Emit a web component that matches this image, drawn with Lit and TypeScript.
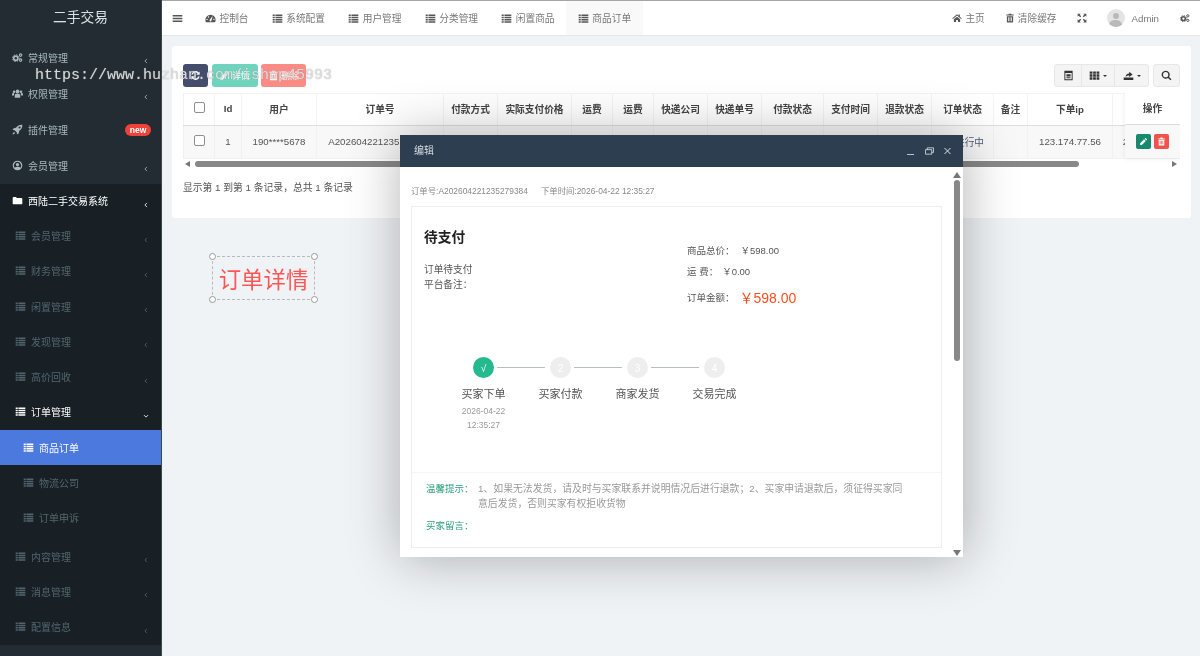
import { LitElement, html, css, svg } from "lit";
import { customElement } from "lit/decorators.js";

const paths: Record<string, any> = {
  list: svg`<path d="M0 0h3v2.4H0zM4 0h10v2.4H4zM0 3.3h3v2.4H0zM4 3.3h10v2.4H4zM0 6.6h3V9H0zM4 6.6h10V9H4zM0 9.9h3v2.1H0zM4 9.9h10v2.1H4z" transform="translate(1 2)"/>`,
  cogs: svg`<circle cx="5.5" cy="9" r="3" fill="none" stroke="currentColor" stroke-width="2.4"/><circle cx="5.5" cy="9" r="4.9" fill="none" stroke="currentColor" stroke-width="1.4" stroke-dasharray="2 1.85"/><circle cx="12.5" cy="4.5" r="1.8" fill="none" stroke="currentColor" stroke-width="1.6"/><circle cx="12.5" cy="11.8" r="1.8" fill="none" stroke="currentColor" stroke-width="1.6"/>`,
  users: svg`<circle cx="8" cy="5" r="2.7"/><circle cx="3" cy="5.5" r="1.9"/><circle cx="13" cy="5.5" r="1.9"/><path d="M4 14v-3.2C4 9 5.5 8 8 8s4 1 4 2.8V14zM0 11V9c0-1 1-1.6 2-1.6h1.2C2.800 8.400 3 9.600 3 11zM16 11V9c0-1-1-1.600-2-1.600h-1.200c.4 1 .2 2.200.2 3.600z"/>`,
  rocket: svg`<path d="M15 1c-4-.3-7 1.500-9.200 4.600L2.500 6 .8 8.700l3 .3L7 12.200l.3 3L10 13.500l.4-3.300C13.500 8 15.300 5 15 1zM11 6.500a1.500 1.500 0 1 1 0-3 1.500 1.500 0 0 1 0 3zM3 11.500c-1.200.6-2 2-2.200 3.700C2.500 15 3.900 14.200 4.500 13z"/>`,
  user: svg`<path fill-rule="evenodd" d="M8 1a7 7 0 1 0 0 14A7 7 0 0 0 8 1zm0 1.700a5.300 5.300 0 0 1 4.200 8.500C11.300 10.200 9.800 9.700 8 9.700s-3.300.5-4.200 1.500A5.300 5.300 0 0 1 8 2.700zM8 4.200a2.400 2.400 0 1 0 0 4.800 2.400 2.400 0 0 0 0-4.800z"/>`,
  folder: svg`<path d="M1 4.300C1 3.500 1.600 3 2.300 3h3.400l1.500 1.500h6.500c.7 0 1.300.6 1.300 1.300v6.400c0 .7-.6 1.300-1.300 1.300H2.300c-.7 0-1.300-.6-1.300-1.300z"/>`,
  gauge: svg`<path fill-rule="evenodd" d="M8 2.500a7.500 7.500 0 0 0-7.500 7.500c0 1.400.4 2.600 1 3.500h13c.6-.9 1-2.100 1-3.500A7.500 7.500 0 0 0 8 2.500zM3 10.300a1 1 0 1 1 0-2 1 1 0 0 1 0 2zm2-3.500a1 1 0 1 1 0-2 1 1 0 0 1 0 2zm3.900 5.200a1.500 1.500 0 0 1-2.200-1.700l3.800-5.200.6.300zM13 10.300a1 1 0 1 1 0-2 1 1 0 0 1 0 2z"/>`,
  bars: svg`<path d="M1 3h14v2H1zM1 7h14v2H1zM1 11h14v2H1z"/>`,
  home: svg`<path d="M8 2 .5 8.500l1 1L8 4l6.500 5.500 1-1L12.500 6V2.500h-2v1.800zM3 10v4.500h3.500V11h3v3.500H13V10L8 5.800z"/>`,
  trash: svg`<path fill-rule="evenodd" d="M5.500 2.500 6.200 1h3.600l.7 1.500H14V4H2V2.500zM3 5h10v9c0 .6-.4 1-1 1H4c-.6 0-1-.4-1-1zm2 1.800V13h1.200V6.800zm2.400 0V13h1.200V6.800zm2.400 0V13H11V6.800z"/>`,
  expand: svg`<path d="M1 1h5L4.300 2.700 6.800 5.200 5.200 6.800 2.700 4.300 1 6zM15 1v5l-1.700-1.700-2.500 2.500-1.600-1.600 2.500-2.500L10 1zM1 15v-5l1.700 1.700 2.500-2.500 1.600 1.600-2.500 2.500L6 15zM15 15h-5l1.700-1.700-2.500-2.500 1.600-1.600 2.500 2.500L15 10z"/>`,
  refresh: svg`<path d="M14 2v4.800H9.200l1.800-1.800A4.200 4.200 0 0 0 4 6.500H1.900A6.300 6.300 0 0 1 12.500 3.500zM2 14V9.200h4.800L5 11a4.200 4.200 0 0 0 7-1.500h2.100A6.300 6.300 0 0 1 3.500 12.500z"/>`,
  table: svg`<path fill-rule="evenodd" d="M2 1h12v14H2zm1.400 3.500V13.600h9.200V4.500zM5 6h6v3.500H5zM5 10.500h6V12H5z"/>`,
  grid: svg`<path d="M1 2h4v3.400H1zM6 2h4v3.400H6zM11 2h4v3.400h-4zM1 6.300h4v3.400H1zM6 6.300h4v3.400H6zM11 6.300h4v3.400h-4zM1 10.600h4V14H1zM6 10.600h4V14H6zM11 10.600h4V14h-4z"/>`,
  exp: svg`<path d="M1 11h14v3.500H1zM4 10c0-3 1.500-5 5-5V2.500L14 6.500 9 10V8C6.800 8 5.500 8.500 4 10z"/>`,
  search: svg`<path fill-rule="evenodd" d="M6.800 1a5.800 5.800 0 1 0 3.400 10.500l3.500 3.500 1.500-1.500-3.500-3.500A5.800 5.800 0 0 0 6.800 1zm0 2a3.800 3.800 0 1 1 0 7.600 3.800 3.800 0 0 1 0-7.600z"/>`,
  pencil: svg`<path d="M11.500 1.500 14.500 4.500 13 6 10 3zM9 4 12 7 5 14H2v-3z"/>`,
  left: svg`<path d="M10.500 2.500 5 8l5.500 5.500" fill="none" stroke="currentColor" stroke-width="2.600"/>`,
  down: svg`<path d="M2.500 5.500 8 11l5.500-5.500" fill="none" stroke="currentColor" stroke-width="2.600"/>`,
};
const ic = (n: string, cls = "") => html`<svg class="ic ${cls}" viewBox="0 0 16 16" fill="currentColor">${paths[n]}</svg>`;

const heads: [string, number][] = [["", 31], ["Id", 27], ["用户", 75], ["订单号", 127], ["付款方式", 54], ["实际支付价格", 74], ["运费", 41], ["运费", 41], ["快递公司", 54], ["快递单号", 54], ["付款状态", 62], ["支付时间", 54], ["退款状态", 54], ["订单状态", 62], ["备注", 34], ["下单ip", 85], ["下单时间", 110]];
const cells = ["", "1", "190****5678", "A202604221235279384", "", "", "", "", "", "", "", "", "", "进行中", "", "123.174.77.56", "2026-04-22 12:35:27"];

@customElement("app-root")
export class AppRoot extends LitElement {
  static styles = css`
    :host { display: block; width: 1200px; height: 656px; overflow: hidden; font-family: "Liberation Sans", "Noto Sans CJK SC", sans-serif; font-size: 9.7px; color: #555; }
    .page { position: relative; display: flex; width: 1200px; height: 656px; background: #f0f3f6; filter: blur(.3px); overflow: hidden; }
    .ic { width: 11px; height: 11px; flex: none; display: block; }
    .side { width: 162px; flex: none; background: #222c32; color: #a9b8bf; border-right: 1px solid #3d464b; box-sizing: border-box; }
    .logo { height: 40px; display: flex; align-items: flex-start; justify-content: center; padding-top: 10px; box-sizing: border-box; font-size: 13.7px; line-height: 16px; color: #dbe2e6; }
    .row { position: relative; display: flex; align-items: center; height: 36px; box-sizing: border-box; padding-left: 12px; padding-bottom: 2px; gap: 5px; font-size: 10px; }
    .row .chev { position: absolute; left: 143px; top: 50%; margin-top: 0; width: 6px; height: 6px; opacity: .85; }
    .badge { position: absolute; left: 125px; top: 12px; height: 12px; width: 26px; border-radius: 6px; background: #f0413b; color: #fff; font-weight: 700; font-size: 8.500px; line-height: 12px; text-align: center; }
    .dark { background: #182025; color: #52656f; height: 461px; box-sizing: border-box; }
    .dark .row { height: 35.200px; padding-left: 15px; }
    .dark .open { color: #fff; padding-left: 12px; gap: 5px; }
    .dark .on { color: #fff; }
    .subs { padding-bottom: 4.300px; }
    .subs .row { height: 35px; padding-left: 23px; padding-bottom: 0; }
    .subs .active { background: #4c79dd; color: #fff; }
    .main { flex: 1; min-width: 0; display: flex; flex-direction: column; }
    .top { height: 36px; box-sizing: border-box; background: #fff; border-top: 1px solid #a5a5a5; border-bottom: 1px solid #e2e7ea; display: flex; align-items: stretch; font-size: 9.700px; color: #777; padding-left: 10px; }
    .burger { width: 21px; display: flex; align-items: center; color: #555; }
    .tab { display: flex; align-items: center; gap: 3.500px; padding: 0 11.650px; color: #777; }
    .tab .ic { color: #555; }
    .tab.cur { background: #f9f9f9; }
    .tab.first { padding: 0 11.500px 0 12px; }
    .spacer { flex: 1; }
    .tr { display: flex; align-items: center; padding: 0 10px; gap: 3px; color: #777; }
    .tr .ic { color: #555; width: 10px; height: 10px; }
    .tr.gear { padding-left: 11px; }
    .avatar { width: 18px; height: 18px; border-radius: 50%; background: #e4e4e4; position: relative; overflow: hidden; flex: none; margin-right: 4px; }
    .avatar::before { content: ""; position: absolute; left: 6px; top: 3.500px; width: 6px; height: 6px; border-radius: 50%; background: #b9b9b9; }
    .avatar::after { content: ""; position: absolute; left: 2.500px; top: 10.500px; width: 13px; height: 9px; border-radius: 50%; background: #b9b9b9; }
    .card { margin: 10px 9px 0 10px; height: 172px; box-sizing: border-box; background: #fff; border-radius: 3px; padding: 18px 11px 0; }
    .tools { display: flex; height: 23px; gap: 3.500px; }
    .btn { display: flex; align-items: center; justify-content: center; gap: 2px; height: 23px; border-radius: 3px; color: #fff; font-size: 9px; box-sizing: border-box; }
    .refresh { width: 25px; background: #444d6b; }
    .b-edit { width: 46px; background: #70d3bd; }
    .b-del { width: 45px; background: #fa8b85; }
    .group { margin-left: auto; display: flex; background: #f4f4f4; border: 1px solid #e7e7e7; border-radius: 3px; box-sizing: border-box; height: 23px; color: #333; }
    .group > div { display: flex; align-items: center; justify-content: center; gap: 3px; border-left: 1px solid #e7e7e7; box-sizing: border-box; }
    .group > div:first-child { border-left: 0; }
    .g1 { width: 26px; } .g2 { width: 33px; } .g3 { width: 34px; }
    .caret { width: 0; height: 0; border: 2.500px solid transparent; border-top-color: #333; border-bottom: 0; }
    .search { width: 27px; margin-left: .5px; color: #333; background: #f4f4f4; border: 1px solid #e7e7e7; }
    .tbl-wrap { position: relative; margin-top: 6px; height: 77px; overflow: hidden; }
    table { border-collapse: collapse; table-layout: fixed; width: 1039px; }
    th { height: 32px; padding: 0 0 2px; box-sizing: border-box; font-size: 9.700px; font-weight: 700; color: #444; background: #fff; border-left: 1px solid #f3f3f3; border-top: 1px solid #f3f3f3; border-bottom: 1px solid #ddd; white-space: nowrap; }
    td { height: 33px; padding: 0 0 1px; box-sizing: border-box; text-align: center; color: #555; background: #f8f8f8; border-left: 1px solid #f1f1f1; border-bottom: 1px solid #f1f1f1; white-space: nowrap; overflow: hidden; }
    td.state { color: #4f5b7a; padding-left: 14px; }
    .cb { display: block; width: 9px; height: 9px; border: 1px solid #8f8f8f; border-radius: 2px; background: #fff; margin: -3px auto 0; }
    .fixed { position: absolute; left: 942px; top: 0; width: 55px; height: 65px; background: #fff; box-shadow: 0 0 6px rgba(0,0,0,.08); display: flex; flex-direction: column; }
    .fixed .h { height: 32px; display: flex; align-items: center; justify-content: center; font-weight: 700; color: #444; border-bottom: 1px solid #ddd; box-sizing: border-box; padding-bottom: 2px; }
    .fixed .c { flex: 1; display: flex; align-items: center; justify-content: center; gap: 2.500px; background: #f8f8f8; }
    .act { width: 15.500px; height: 15.500px; border-radius: 2px; display: flex; align-items: center; justify-content: center; color: #fff; }
    .act .ic { width: 9px; height: 9px; }
    .act.g { background: #18896f; }
    .act.r { background: #f0524d; }
    .sbar { position: absolute; left: 0; right: 0; top: 65px; height: 12px; display: flex; align-items: center; padding: 0 2px; gap: 4px; }
    .thumb { position: absolute; left: 12px; width: 884px; height: 6px; border-radius: 3px; background: #888; }
    .ar-l { width: 0; height: 0; border: 3px solid transparent; border-right: 5px solid #777; border-left: 0; }
    .ar-r { position: absolute; left: 989px; width: 0; height: 0; border: 3.500px solid transparent; border-left: 5px solid #777; border-right: 0; }
    .foot { margin-top: 12px; color: #555; line-height: 12px; font-size: 9.800px; }
    .mark { position: relative; margin: 38px 0 0 50px; width: 103px; height: 44px; box-sizing: border-box; border: 1px dashed #b9b9b9; display: flex; align-items: center; justify-content: center; font-size: 22.400px; color: #fb5656; white-space: nowrap; }
    .dot { position: absolute; width: 5px; height: 5px; border: 1px solid #999; border-radius: 50%; background: #fff; }
    .d1 { left: -4px; top: -4px; } .d2 { right: -4px; top: -4px; } .d3 { left: -4px; bottom: -4px; } .d4 { right: -4px; bottom: -4px; }
    .wm { position: absolute; left: 35px; top: 67px; font-family: "Liberation Mono", monospace; font-size: 15px; line-height: 18px; color: rgba(255,255,255,.7); text-shadow: 0 0 1px #888; white-space: nowrap; }
    .modal { position: absolute; left: 400px; top: 135px; width: 563px; height: 422px; background: #fff; box-shadow: 1px 1px 50px rgba(0,0,0,.3); display: flex; flex-direction: column; overflow: hidden; }
    .m-title { height: 32px; flex: none; background: #2c3e50; color: #d5dbe0; font-size: 10px; display: flex; align-items: center; padding-left: 14px; }
    .m-title > span { padding-bottom: 3px; }
    .m-ctl { margin-left: auto; display: flex; align-items: center; gap: 10.500px; padding-right: 12px; color: #dfe4e8; }
    .m-ctl svg { width: 7px; height: 8px; display: block; }
    .m-ctl svg.wide { width: 9px; }
    .m-body { flex: 1; padding: 19px 0 0 11px; position: relative; }
    .meta { display: flex; gap: 13px; font-size: 8.400px; line-height: 10px; color: #888; white-space: nowrap; height: 10px; }
    .box { margin-top: 10px; width: 531px; height: 342px; box-sizing: border-box; border: 1px solid #eee; display: flex; flex-direction: column; }
    .sum { display: flex; height: 150px; flex: none; }
    .sum-l { width: 263px; flex: none; padding: 22px 0 0 12px; color: #555; font-size: 9.700px; line-height: 15px; }
    .h-state { font-size: 13.700px; line-height: 18px; font-weight: 700; color: #222; margin-bottom: 15px; }
    .sum-r { padding-top: 32px; color: #555; font-size: 9.500px; }
    .li { display: flex; align-items: center; height: 21px; gap: 6px; }
    .li.tot { height: 31px; gap: 5px; }
    .li.fee { gap: 4px; }
    .red { font-size: 14px; color: #ff4d20; }
    .steps { display: flex; height: 115px; flex: none; padding: 0 0 0 33px; }
    .step { width: 77px; position: relative; display: flex; flex-direction: column; align-items: center; }
    .circle { width: 21px; height: 21px; border-radius: 50%; background: #eee; color: #fff; font-size: 10px; display: flex; align-items: center; justify-content: center; padding-top: 2px; box-sizing: border-box; flex: none; }
    .circle.ok { background: #25b98f; }
    .link { position: absolute; left: 52px; top: 10px; width: 48px; height: 1.200px; background: #b8bec8; }
    .s-l { margin-top: 9px; font-size: 11px; line-height: 14px; color: #555; white-space: nowrap; }
    .s-d { font-size: 8.500px; line-height: 14px; color: #999; margin-top: 3px; white-space: nowrap; }
    .s-d + .s-d { margin-top: 0; }
    .tips { border-top: 1px solid #f5f5f5; padding: 8px 0 0 14px; color: #999; font-size: 9.850px; line-height: 15px; }
    .tip { display: flex; gap: 8px; margin-bottom: 7px; }
    .tip b { font-weight: 400; color: #2a9d80; font-size: 9.500px; white-space: nowrap; width: 44px; flex: none; }
    .tip span { width: 432px; }
    .vbar { position: absolute; right: 2px; top: 32px; bottom: 0; width: 8px; }
    .v-t { position: absolute; left: 0; top: 5px; width: 0; height: 0; border: 4px solid transparent; border-bottom: 6px solid #777; border-top: 0; }
    .v-b { position: absolute; left: 0; bottom: 1px; width: 0; height: 0; border: 4px solid transparent; border-top: 6px solid #777; border-bottom: 0; }
    .v-th { position: absolute; left: 1px; top: 13px; width: 6px; height: 181px; border-radius: 3px; background: #888; }
  `;

  private side(n: string, t: string, extra: any = "") {
    return html`<div class="row">${ic(n)}<span>${t}</span>${extra}</div>`;
  }

  render() {
    const chev = ic("left", "chev");
    const dim = ["会员管理", "财务管理", "闲置管理", "发现管理", "高价回收"];
    const tabs = ["系统配置", "用户管理", "分类管理", "闲置商品"];
    return html`<div class="page">
      <aside class="side">
        <div class="logo">二手交易</div>
        ${this.side("cogs", "常规管理", chev)}
        ${this.side("users", "权限管理", chev)}
        ${this.side("rocket", "插件管理", html`<span class="badge">new</span>`)}
        ${this.side("user", "会员管理", chev)}
        <div class="dark">
          <div class="row open">${ic("folder")}<span>西陆二手交易系统</span>${chev}</div>
          ${dim.map((t) => this.side("list", t, chev))}
          <div class="row on">${ic("list")}<span>订单管理</span>${ic("down", "chev")}</div>
          <div class="subs">
            <div class="row active">${ic("list")}<span>商品订单</span></div>
            ${this.side("list", "物流公司")}
            ${this.side("list", "订单申诉")}
          </div>
          ${["内容管理", "消息管理", "配置信息"].map((t) => this.side("list", t, chev))}
        </div>
      </aside>
      <main class="main">
        <header class="top">
          <div class="burger">${ic("bars")}</div>
          <div class="tab first">${ic("gauge")}<span>控制台</span></div>
          ${tabs.map((t) => html`<div class="tab">${ic("list")}<span>${t}</span></div>`)}
          <div class="tab cur">${ic("list")}<span>商品订单</span></div>
          <div class="spacer"></div>
          <div class="tr">${ic("home")}<span>主页</span></div>
          <div class="tr">${ic("trash")}<span>清除缓存</span></div>
          <div class="tr">${ic("expand")}</div>
          <div class="tr"><span class="avatar"></span><span>Admin</span></div>
          <div class="tr gear">${ic("cogs")}</div>
        </header>
        <section class="card">
          <div class="tools">
            <div class="btn refresh">${ic("refresh")}</div>
            <div class="btn b-edit">${ic("pencil")}<span>详情</span></div>
            <div class="btn b-del">${ic("trash")}<span>删除</span></div>
            <div class="group">
              <div class="g1">${ic("table")}</div>
              <div class="g2">${ic("grid")}<i class="caret"></i></div>
              <div class="g3">${ic("exp")}<i class="caret"></i></div>
            </div>
            <div class="btn search">${ic("search")}</div>
          </div>
          <div class="tbl-wrap">
            <table>
              <colgroup>${heads.map((h) => html`<col style="width:${h[1]}px" />`)}</colgroup>
              <tr>${heads.map((h, i) => html`<th>${i === 0 ? html`<span class="cb"></span>` : h[0]}</th>`)}</tr>
              <tr>${cells.map((c, i) => html`<td class=${i === 13 ? "state" : ""}>${i === 0 ? html`<span class="cb"></span>` : c}</td>`)}</tr>
            </table>
            <div class="fixed">
              <div class="h">操作</div>
              <div class="c"><span class="act g">${ic("pencil")}</span><span class="act r">${ic("trash")}</span></div>
            </div>
            <div class="sbar"><i class="ar-l"></i><i class="thumb"></i><i class="ar-r"></i></div>
          </div>
          <div class="foot">显示第 1 到第 1 条记录，总共 1 条记录</div>
        </section>
        <div class="mark">订单详情<i class="dot d1"></i><i class="dot d2"></i><i class="dot d3"></i><i class="dot d4"></i></div>
      </main>
      <div class="wm">https://www.huzhan.com/ishop45993</div>
      <div class="modal">
        <div class="m-title"><span>编辑</span>
          <div class="m-ctl">
            <svg viewBox="0 0 7 8"><path d="M0 7.500h7" stroke="currentColor" fill="none" stroke-width=".8"/></svg>
            <svg class="wide" viewBox="0 0 10 8"><path d="M.5 2.500h7v5h-7zM2.500 2.500V.5h7v5h-2" stroke="currentColor" fill="none" stroke-width=".9"/></svg>
            <svg viewBox="0 0 7 8"><path d="M.5 1l6 6M6.500 1l-6 6" stroke="currentColor" fill="none"/></svg>
          </div>
        </div>
        <div class="m-body">
          <div class="meta"><span>订单号:A202604221235279384</span><span>下单时间:2026-04-22 12:35:27</span></div>
          <div class="box">
            <div class="sum">
              <div class="sum-l">
                <div class="h-state">待支付</div>
                <div>订单待支付</div>
                <div>平台备注：</div>
              </div>
              <div class="sum-r">
                <div class="li"><span>商品总价：</span><span>￥598.00</span></div>
                <div class="li fee"><span>运 费：</span><span>￥0.00</span></div>
                <div class="li tot"><span>订单金额：</span><span class="red">￥598.00</span></div>
              </div>
            </div>
            <div class="steps">
              <div class="step"><span class="circle ok">√</span><i class="link"></i><span class="s-l">买家下单</span><span class="s-d">2026-04-22</span><span class="s-d">12:35:27</span></div>
              <div class="step"><span class="circle">2</span><i class="link"></i><span class="s-l">买家付款</span></div>
              <div class="step"><span class="circle">3</span><i class="link"></i><span class="s-l">商家发货</span></div>
              <div class="step"><span class="circle">4</span><span class="s-l">交易完成</span></div>
            </div>
            <div class="tips">
              <div class="tip"><b>温馨提示：</b><span>1、如果无法发货，请及时与买家联系并说明情况后进行退款；2、买家申请退款后，须征得买家同意后发货，否则买家有权拒收货物</span></div>
              <div class="tip"><b>买家留言：</b><span></span></div>
            </div>
          </div>
        </div>
        <div class="vbar"><i class="v-t"></i><i class="v-th"></i><i class="v-b"></i></div>
      </div>
    </div>`;
  }
}
